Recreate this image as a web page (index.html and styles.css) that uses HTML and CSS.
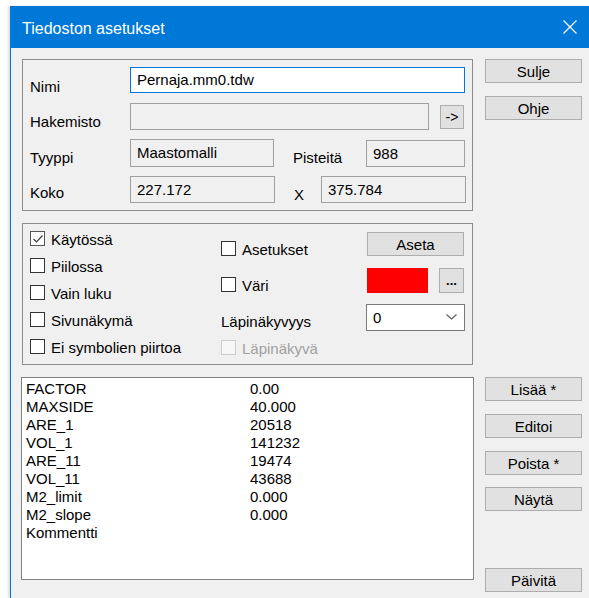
FILE: index.html
```html
<!DOCTYPE html>
<html lang="fi">
<head>
<meta charset="utf-8">
<title>Tiedoston asetukset</title>
<link rel="stylesheet" href="styles.css">
</head>
<body>
<div class="window">
  <div class="titlebar">
    <span class="title">Tiedoston asetukset</span>
    <svg class="close" width="14" height="14" viewBox="0 0 14 14"><path d="M0.5 0.5 L13.5 13.5 M13.5 0.5 L0.5 13.5" stroke="#fff" stroke-width="1.2" fill="none"/></svg>
  </div>
  <div class="client">
    <div class="group group-file">
      <div class="frow r1">
        <span class="lbl w-lbl">Nimi</span>
        <div class="field edit focus w-name">Pernaja.mm0.tdw</div>
      </div>
      <div class="frow r2">
        <span class="lbl w-lbl">Hakemisto</span>
        <div class="field disabled w-dir"></div>
        <button class="btn btn-arrow">-&gt;</button>
      </div>
      <div class="frow r3">
        <span class="lbl w-lbl">Tyyppi</span>
        <div class="field ro w-half">Maastomalli</div>
        <span class="lbl w-pts">Pisteitä</span>
        <div class="field ro w-pts-box">988</div>
      </div>
      <div class="frow r4">
        <span class="lbl w-lbl">Koko</span>
        <div class="field ro w-half">227.172</div>
        <span class="lbl w-x">X</span>
        <div class="field ro w-half">375.784</div>
      </div>
    </div>

    <div class="side side-top">
      <button class="btn side-btn">Sulje</button>
      <button class="btn side-btn">Ohje</button>
    </div>

    <div class="group group-flags">
      <div class="col col-a">
        <label class="check"><span class="box checked"><svg width="12" height="12" viewBox="0 0 12 12"><path d="M1.5 6 L4.5 9 L10.5 2.5" stroke="#3c3c3c" stroke-width="1.2" fill="none"/></svg></span><span>Käytössä</span></label>
        <label class="check"><span class="box"></span><span>Piilossa</span></label>
        <label class="check"><span class="box"></span><span>Vain luku</span></label>
        <label class="check"><span class="box"></span><span>Sivunäkymä</span></label>
        <label class="check"><span class="box"></span><span>Ei symbolien piirtoa</span></label>
      </div>
      <div class="col col-b">
        <label class="check c-set"><span class="box"></span><span>Asetukset</span></label>
        <label class="check c-color"><span class="box"></span><span>Väri</span></label>
        <span class="lbl c-alpha">Läpinäkyvyys</span>
        <label class="check c-trans disabled-check"><span class="box"></span><span>Läpinäkyvä</span></label>
      </div>
      <div class="col col-c">
        <button class="btn btn-set">Aseta</button>
        <div class="color-row">
          <span class="swatch"></span>
          <button class="btn btn-dots">...</button>
        </div>
        <div class="combo">
          <span>0</span>
          <svg width="11" height="6" viewBox="0 0 11 6"><path d="M0.5 0.5 L5.5 5 L10.5 0.5" stroke="#5a5a5a" stroke-width="1.1" fill="none"/></svg>
        </div>
      </div>
    </div>

    <div class="list">
      <div class="item"><span class="key">FACTOR</span><span>0.00</span></div>
      <div class="item"><span class="key">MAXSIDE</span><span>40.000</span></div>
      <div class="item"><span class="key">ARE_1</span><span>20518</span></div>
      <div class="item"><span class="key">VOL_1</span><span>141232</span></div>
      <div class="item"><span class="key">ARE_11</span><span>19474</span></div>
      <div class="item"><span class="key">VOL_11</span><span>43688</span></div>
      <div class="item"><span class="key">M2_limit</span><span>0.000</span></div>
      <div class="item"><span class="key">M2_slope</span><span>0.000</span></div>
      <div class="item"><span class="key">Kommentti</span><span></span></div>
    </div>

    <div class="side side-bottom">
      <button class="btn side-btn">Lisää *</button>
      <button class="btn side-btn gap13">Editoi</button>
      <button class="btn side-btn gap13">Poista *</button>
      <button class="btn side-btn gap12">Näytä</button>
      <button class="btn side-btn refresh">Päivitä</button>
    </div>
  </div>
</div>
</body>
</html>
```

FILE: styles.css
```css
* { box-sizing: border-box; }

html, body {
  margin: 0;
  width: 589px;
  height: 598px;
  overflow: hidden;
  background: #ffffff;
}

body {
  padding-top: 6px;
  font-family: "Liberation Sans", Arial, sans-serif;
  font-size: 15px;
  color: #000;
}

.window {
  margin-left: 10px;
  height: 592px;
  border-left: 1px solid #0078d7;
  box-shadow: -2px 0 2px rgba(0, 0, 0, 0.12);
  display: flex;
  flex-direction: column;
}

/* title bar */
.titlebar {
  height: 42px;
  background: #0078d7;
  display: flex;
  align-items: center;
  justify-content: space-between;
  padding: 3px 12px 0 11px;
  flex: none;
}
.title {
  color: #fff;
  font-size: 16px;
  line-height: 18px;
}
.close { display: block; margin-top: -4px; }

/* client area */
.client {
  flex: 1;
  background: #f0f0f0;
  padding: 11px 0 0 10px;
  display: grid;
  grid-template-columns: 453px 97px;
  grid-template-rows: auto auto auto;
  align-content: start;
  column-gap: 11px;
  align-items: start;
}

.group {
  border: 1px solid #8c8c8c;
  margin-left: 1px;
  width: 451px;
}

/* file group */
.group-file {
  height: 152px;
  padding: 7px 0 0 7px;
  grid-column: 1;
  grid-row: 1;
}
.frow {
  display: flex;
  align-items: flex-end;
}
.r1 { height: 26px; }
.r2 { height: 27px; margin-top: 10px; }
.r3 { height: 28px; margin-top: 9px; }
.r4 { height: 27px; margin-top: 9px; }

.lbl { line-height: 17px; white-space: nowrap; }
.r1 .lbl { margin-bottom: -2px; }
.r3 .lbl { margin-bottom: 1px; }
.r4 .w-lbl { margin-bottom: 2px; }

.w-lbl { width: 100px; flex: none; }
.w-pts { width: 73px; margin-left: 19px; }
.w-x { width: 27px; margin-left: 19px; }

.field {
  height: 100%;
  border: 1px solid #a0a0a0;
  background: #f0f0f0;
  display: flex;
  align-items: center;
  padding: 0 6px 1px 6px;
  line-height: 17px;
  flex: none;
}
.field.edit { background: #fff; }
.field.focus { border-color: #0078d7; }
.w-name { width: 335px; }
.w-dir { width: 299px; }
.w-half { width: 145px; }
.r3 .w-half { width: 144px; }
.w-pts-box { width: 99px; }
.r3 .w-pts-box { height: 27px; }

.btn {
  font-family: "Liberation Sans", Arial, sans-serif;
  font-size: 15px;
  color: #000;
  background: #e1e1e1;
  border: 1px solid #adadad;
  padding: 0;
  margin: 0;
  line-height: 17px;
  height: 24px;
}
.btn-arrow {
  width: 24px;
  height: 24px;
  margin-left: 11px;
  margin-bottom: 1px;
  font-size: 14px;
}

/* side buttons */
.side {
  display: flex;
  flex-direction: column;
  grid-column: 2;
}
.side-btn { width: 97px; flex: none; }
.side-top { grid-row: 1; gap: 13px; }
.side-bottom {
  grid-row: 3;
  height: 215px;
  margin-top: 12px;
}
.side-btn.gap13 { margin-top: 13px; }
.side-btn.gap12 { margin-top: 12px; }
.side-btn.refresh { margin-top: auto; }

/* flags group */
.group-flags {
  grid-column: 1;
  grid-row: 2;
  margin-top: 12px;
  height: 142px;
  padding-left: 7px;
  display: flex;
}
.col { display: flex; flex-direction: column; }
.col-a { width: 191px; padding-top: 7px; gap: 11px; }
.col-b { width: 145px; }
.col-c { width: 99px; }

.check {
  display: flex;
  align-items: flex-start;
  height: 16px;
  line-height: 17px;
  white-space: nowrap;
}
.box {
  width: 15px;
  height: 15px;
  border: 1px solid #333;
  background: #fff;
  margin-right: 6px;
  flex: none;
  display: flex;
  align-items: center;
  justify-content: center;
}
.box.checked { border-color: #555; }
.disabled-check { color: #a0a0a0; }
.disabled-check .box { border-color: #cccccc; background: #f7f7f7; }

.c-set { margin-top: 17px; }
.c-color { margin-top: 20px; }
.c-alpha { margin-top: 20px; }
.c-trans { margin-top: 10px; }

.btn-set { width: 97px; margin: 8px 0 0 1px; }
.color-row {
  display: flex;
  margin: 12px 0 0 1px;
  height: 25px;
  gap: 11px;
}
.swatch { width: 61px; height: 25px; background: #ff0000; }
.btn-dots {
  width: 25px;
  height: 25px;
  font-weight: bold;
  font-size: 13px;
  line-height: 12px;
}
.combo {
  margin-top: 11px;
  width: 99px;
  height: 27px;
  border: 1px solid #7a7a7a;
  background: #fff;
  display: flex;
  align-items: center;
  justify-content: space-between;
  padding: 0 7px 1px 6px;
  line-height: 17px;
}
.combo svg { display: block; }

/* property list */
.list {
  grid-column: 1;
  grid-row: 3;
  margin-top: 12px;
  width: 453px;
  height: 203px;
  border: 1px solid #828282;
  background: #fff;
  padding: 2px 0 0 4px;
}
.item {
  display: flex;
  height: 18px;
  line-height: 18px;
}
.key { width: 224px; flex: none; }
```
